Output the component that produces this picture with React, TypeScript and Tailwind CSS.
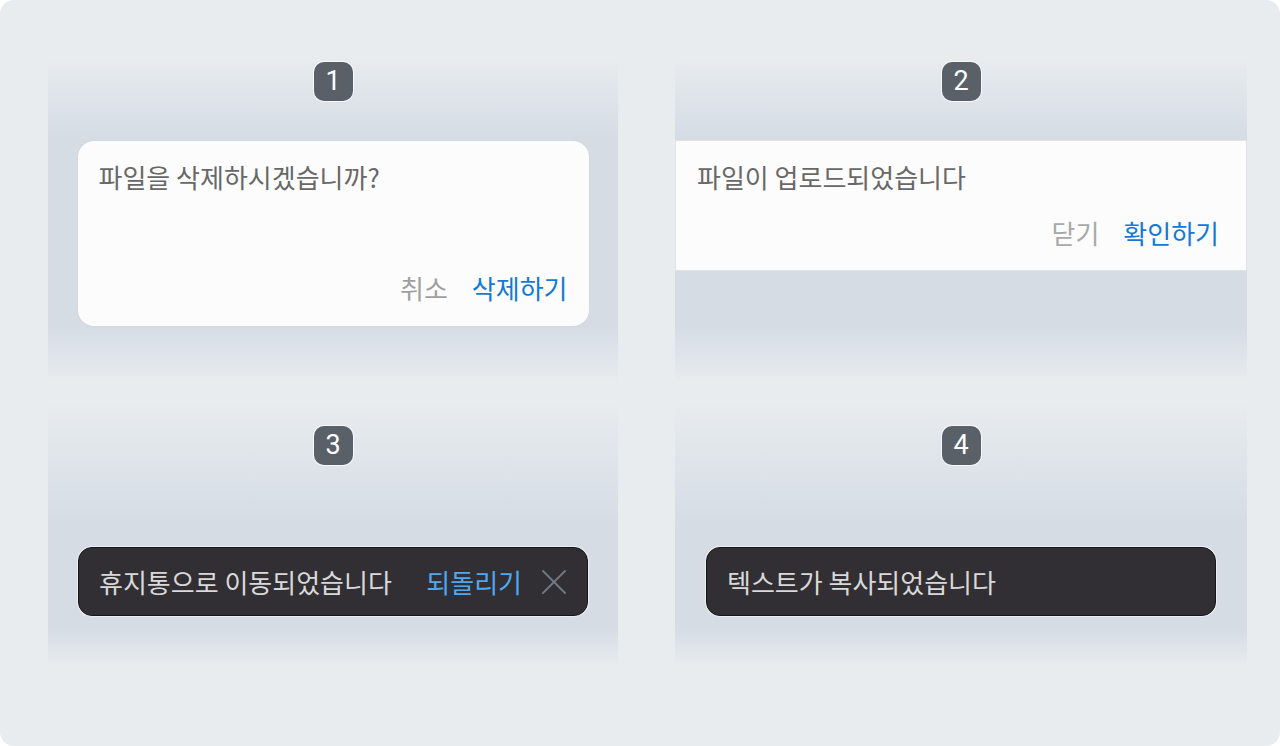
import React from 'react';

const font = { fontFamily: '"Noto Sans CJK KR", "Noto Sans", sans-serif' };

const Badge: React.FC<{ n: number }> = ({ n }) => (
  <div className="mx-auto flex h-[39px] w-[39px] items-center justify-center rounded-[10px] bg-[#5a6068] text-[27px] font-normal leading-none text-white shadow-[0_0_0_1px_rgba(255,255,255,0.7)] [font-family:Roboto,sans-serif]">
    {n}
  </div>
);

const CloseIcon: React.FC = () => (
  <svg width="26" height="26" viewBox="0 0 26 26" fill="none" stroke="#6e7985" strokeWidth="2" strokeLinecap="round">
    <line x1="2" y1="2" x2="24" y2="24" />
    <line x1="24" y1="2" x2="2" y2="24" />
  </svg>
);

const topCell =
  'bg-[linear-gradient(to_bottom,rgba(213,220,228,0)_5%,#d5dce4_28%,#d5dce4_82%,rgba(213,220,228,0)_98%)]';
const bottomCell =
  'bg-[linear-gradient(to_bottom,rgba(213,220,228,0)_4%,#d5dce4_48%,#d5dce4_86%,rgba(213,220,228,0)_99%)]';

const App: React.FC = () => {
  return (
    <div className="min-h-screen bg-white" style={font}>
      <div className="h-[746px] w-[1280px] rounded-[14px] bg-[#e8ecef] pl-[48px] pt-[40px]">
        <div className="grid grid-cols-[570px_572px] grid-rows-[350px_278px] gap-x-[57px]">
          {/* 1: dialog */}
          <div className={`${topCell} pt-[22px]`}>
            <Badge n={1} />
            <div className="mx-auto mt-[40px] flex h-[185px] w-[511px] flex-col justify-between rounded-[16px] bg-[#fcfcfc] pb-[22px] pl-[21px] pr-[21px] pt-[20px] shadow-[0_0_2px_rgba(0,0,0,0.05)]">
              <p className="text-[26px] leading-[32px] text-[#686868]">파일을 삭제하시겠습니까?</p>
              <div className="flex justify-end gap-[24px] text-[26px] leading-[32px]">
                <span className="text-[#a0a0a0]">취소</span>
                <span className="text-[#1279d6]">삭제하기</span>
              </div>
            </div>
          </div>

          {/* 2: banner */}
          <div className={`${topCell} pt-[22px]`}>
            <Badge n={2} />
            <div className="mt-[39px] border border-[#dfe3e8] bg-[#fcfcfc] pb-[21px] pl-[21px] pr-[27px] pt-[20px]">
              <p className="text-[26px] leading-[32px] text-[#686868]">파일이 업로드되었습니다</p>
              <div className="mt-[24px] flex justify-end gap-[24px] text-[26px] leading-[32px]">
                <span className="text-[#a8a8a8]">닫기</span>
                <span className="text-[#1279d6]">확인하기</span>
              </div>
            </div>
          </div>

          {/* 3: snackbar with action */}
          <div className={`${bottomCell} pt-[36px]`}>
            <Badge n={3} />
            <div className="mx-auto mt-[82px] flex h-[69px] w-[510px] items-center rounded-[14px] border border-[#17161a] bg-[#312f34] pl-[20px] pr-[20px] shadow-[0_0_0_1px_rgba(255,255,255,0.5)]">
              <span className="flex-1 text-[26px] leading-[32px] text-[#d9d9d9]">휴지통으로 이동되었습니다</span>
              <span className="text-[26px] leading-[32px] text-[#4fa9ef]">되돌리기</span>
              <span className="ml-[19px] flex">
                <CloseIcon />
              </span>
            </div>
          </div>

          {/* 4: snackbar */}
          <div className={`${bottomCell} pt-[36px]`}>
            <Badge n={4} />
            <div className="mx-auto mt-[82px] flex h-[69px] w-[510px] items-center rounded-[14px] border border-[#17161a] bg-[#312f34] pl-[20px] pr-[20px] shadow-[0_0_0_1px_rgba(255,255,255,0.5)]">
              <span className="text-[26px] leading-[32px] text-[#d9d9d9]">텍스트가 복사되었습니다</span>
            </div>
          </div>
        </div>
      </div>
    </div>
  );
};

export default App;
